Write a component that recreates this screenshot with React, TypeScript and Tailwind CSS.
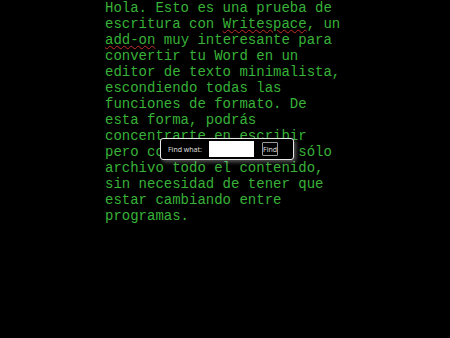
import React from "react";

export default function App() {
  const sq = "underline decoration-wavy decoration-[#c0302a] decoration-1 underline-offset-[1px]";
  return (
    <div className="relative w-[450px] h-[338px] bg-black overflow-hidden">
      <div
        className="ml-[105px] w-[240px] text-[14px] leading-[16px] text-[#38b238]"
        style={{ fontFamily: '"Liberation Mono", "Courier New", monospace' }}
      >
        Hola. Esto es una prueba de escritura con <span className={sq}>Writespace</span>, un{" "}
        <span className={sq}>add-on</span> muy interesante para convertir tu Word en un editor de
        texto minimalista, escondiendo todas las funciones de formato. De esta forma, podrás
        concentrarte en escribir pero conservando en un sólo archivo todo el contenido, sin
        necesidad de tener que estar cambiando entre programas.
      </div>
      <div className="absolute left-[160px] top-[138px] w-[134px] h-[22px] bg-black border-[1.5px] border-[#e8e8e8] rounded-[3px] shadow-[2px_2px_4px_rgba(255,255,255,0.35)] flex items-center">
        <span
          className="ml-[7px] w-[36px] text-[7px] text-[#e0e0e0] leading-none whitespace-nowrap"
          style={{ fontFamily: '"Open Sans", "Liberation Sans", sans-serif' }}
        >
          Find what:
        </span>
        <div className="ml-[5px] w-[45px] h-[16px] bg-white" />
        <div
          className="ml-[8px] w-[16px] h-[14px] border border-[#9a9a9a] rounded-[1px] flex items-center justify-center text-[7px] text-[#e0e0e0] leading-none"
          style={{ fontFamily: '"Open Sans", "Liberation Sans", sans-serif' }}
        >
          Find
        </div>
      </div>
    </div>
  );
}
